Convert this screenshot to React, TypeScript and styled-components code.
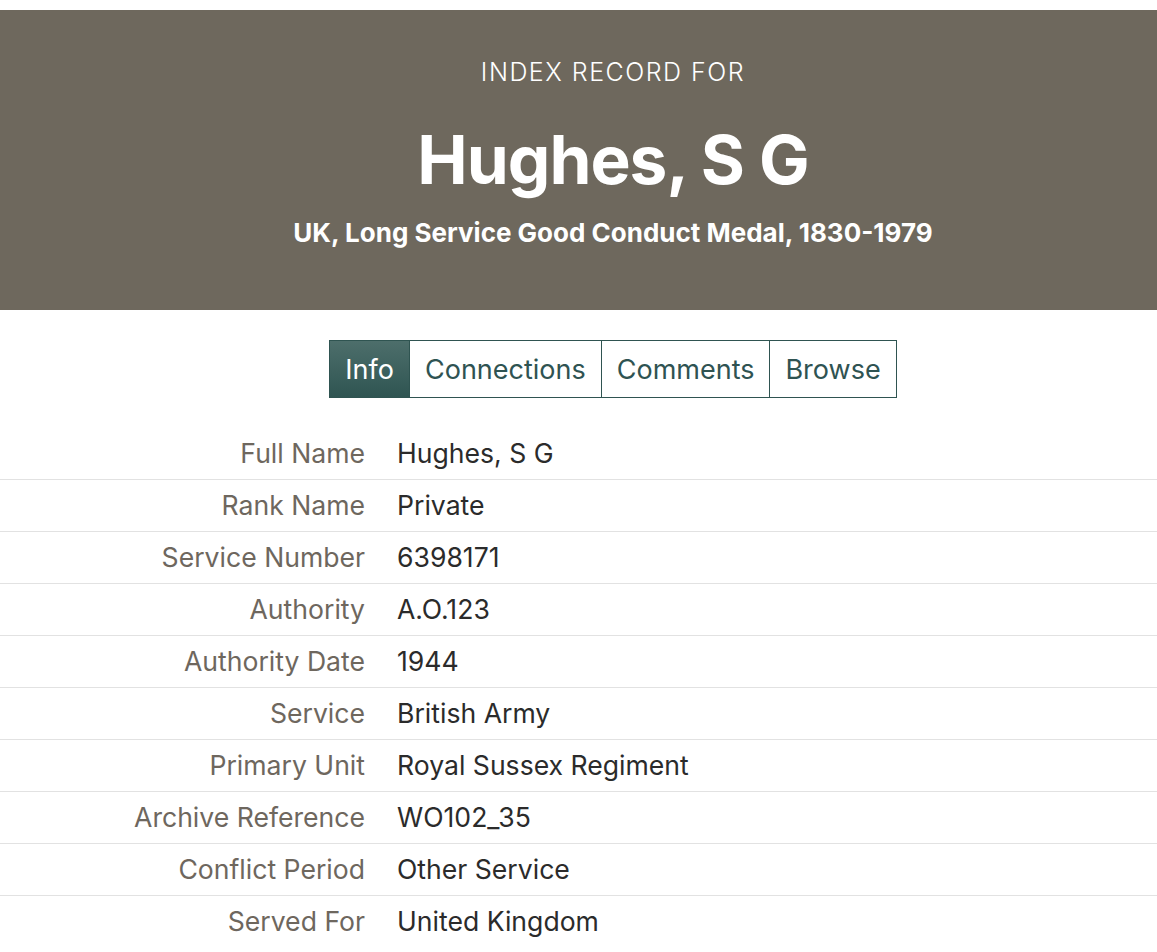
import React from 'react';
import styled, { createGlobalStyle } from 'styled-components';

const GlobalStyle = createGlobalStyle`
	html, body {
		margin: 0;
		padding: 0;
		background: #ffffff;
		font-family: Inter, 'Noto Sans', Arial, sans-serif;
	}
`;

type Field = { label: string; value: string };

const fields: Field[] = [
	{ label: 'Full Name', value: 'Hughes, S G' },
	{ label: 'Rank Name', value: 'Private' },
	{ label: 'Service Number', value: '6398171' },
	{ label: 'Authority', value: 'A.O.123' },
	{ label: 'Authority Date', value: '1944' },
	{ label: 'Service', value: 'British Army' },
	{ label: 'Primary Unit', value: 'Royal Sussex Regiment' },
	{ label: 'Archive Reference', value: 'WO102_35' },
	{ label: 'Conflict Period', value: 'Other Service' },
	{ label: 'Served For', value: 'United Kingdom' },
];

const tabs = ['Info', 'Connections', 'Comments', 'Browse'];

export default function App() {
	return (
		<Page>
			<GlobalStyle />
			<Banner>
				<Kicker>INDEX RECORD FOR</Kicker>
				<Title>Hughes, S G</Title>
				<Collection>UK, Long Service Good Conduct Medal, 1830-1979</Collection>
			</Banner>
			<TabBar>
				{tabs.map((tab, i) => (
					<Tab key={tab} $active={i === 0}>{tab}</Tab>
				))}
			</TabBar>
			<FieldList>
				{fields.map((f) => (
					<FieldRow key={f.label}>
						<FieldLabel>{f.label}</FieldLabel>
						<FieldValue>{f.value}</FieldValue>
					</FieldRow>
				))}
			</FieldList>
		</Page>
	);
}

// centred blocks sit a little right of the window middle in the original
const CENTRE_SHIFT = '69px';

const Page = styled.div`
	padding-top: 10px;
	color: #2b2b2b;
`;

const Banner = styled.header`
	height: 300px;
	box-sizing: border-box;
	background: #6e685d;
	color: #ffffff;
	display: flex;
	flex-direction: column;
	align-items: center;
	padding-top: 46px;
	padding-left: ${CENTRE_SHIFT};
`;

const Kicker = styled.div`
	font-size: 25px;
	font-weight: 300;
	line-height: 32px;
	letter-spacing: 1.5px;
`;

const Title = styled.h1`
	margin: 32px 0 0;
	font-size: 67.5px;
	font-weight: 700;
	line-height: 80px;
	letter-spacing: -1px;
`;

const Collection = styled.div`
	margin-top: 16px;
	font-size: 26px;
	font-weight: 700;
	line-height: 34px;
`;

const TabBar = styled.nav`
	display: flex;
	justify-content: center;
	margin: 30px 0;
	padding-left: ${CENTRE_SHIFT};
`;

const Tab = styled.div<{ $active?: boolean }>`
	height: 58px;
	box-sizing: border-box;
	padding: 0 15px;
	display: flex;
	align-items: center;
	font-size: 27px;
	font-weight: 400;
	border: 1px solid #2f5451;
	margin-left: -1px;
	color: ${(p) => (p.$active ? '#ffffff' : '#2f5352')};
	background: ${(p) => (p.$active ? 'linear-gradient(#4d6e6b, #2f5552)' : '#ffffff')};

	&:first-child {
		margin-left: 0;
	}
`;

const FieldList = styled.div`
	display: flex;
	flex-direction: column;
`;

const FieldRow = styled.div`
	display: grid;
	grid-template-columns: 365px 1fr;
	column-gap: 32px;
	padding: 8px 0;
	border-bottom: 1px solid #e2e2e2;
	font-size: 26.6px;
	line-height: 35px;

	&:last-child {
		border-bottom: none;
	}
`;

const FieldLabel = styled.div`
	text-align: right;
	color: #6e675e;
`;

const FieldValue = styled.div`
	color: #2b2b2b;
`;
